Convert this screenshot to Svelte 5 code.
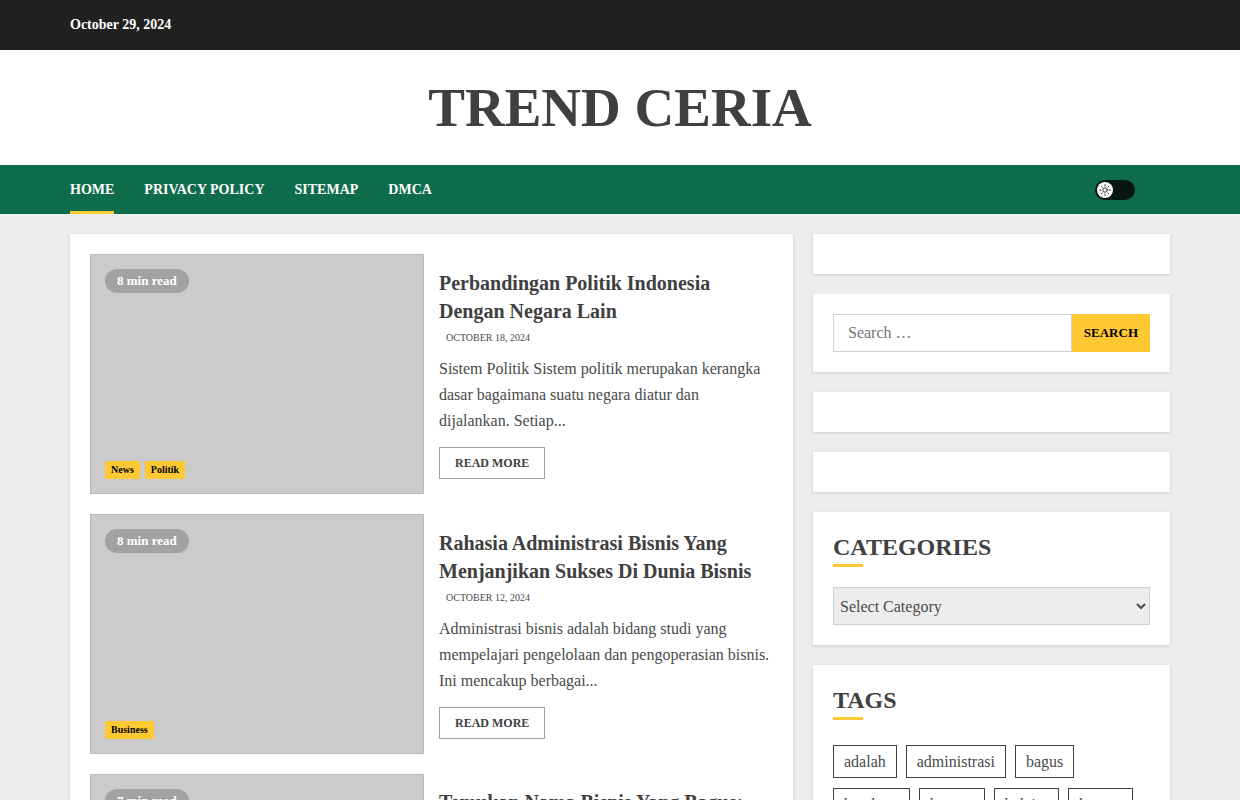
<script>
  const navItems = ['Home', 'Privacy Policy', 'Sitemap', 'DMCA'];

  const posts = [
    {
      title: 'Perbandingan Politik Indonesia Dengan Negara Lain',
      date: 'October 18, 2024',
      minutes: 8,
      categories: ['News', 'Politik'],
      excerpt:
        'Sistem Politik Sistem politik merupakan kerangka dasar bagaimana suatu negara diatur dan dijalankan. Setiap...'
    },
    {
      title: 'Rahasia Administrasi Bisnis Yang Menjanjikan Sukses Di Dunia Bisnis',
      date: 'October 12, 2024',
      minutes: 8,
      categories: ['Business'],
      excerpt:
        'Administrasi bisnis adalah bidang studi yang mempelajari pengelolaan dan pengoperasian bisnis. Ini mencakup berbagai...'
    },
    {
      title: 'Temukan Nama Bisnis Yang Bagus: Panduan Lengkap Untuk Memulai Usaha Anda Sendiri',
      date: 'October 6, 2024',
      minutes: 7,
      categories: ['Business'],
      excerpt: 'Nama bisnis yang bagus adalah kunci untuk menarik perhatian pelanggan...'
    }
  ];

  const tags = ['adalah', 'administrasi', 'bagus', 'bandung', 'barang', 'belajar', 'berapa'];

  let dark = $state(false);
</script>

<div class="topbar">
  <div class="container"><span class="today">October 29, 2024</span></div>
</div>

<header class="masthead">
  <h1><a href="#home">TREND CERIA</a></h1>
</header>

<div class="navbar">
  <div class="container nav-row">
    <nav aria-label="Primary">
      {#each navItems as item, i}
        <a href="#{item}" class:active={i === 0}>{item}</a>
      {/each}
    </nav>
    <button
      class="mode"
      class:dark
      type="button"
      aria-label="Light/Dark Button"
      aria-pressed={dark}
      onclick={() => (dark = !dark)}
    >
      <span class="knob">
        <svg viewBox="0 0 12 12" width="12" height="12" aria-hidden="true">
          <circle cx="6" cy="6" r="2.2" />
          <path
            d="M6 .5v1.5M6 10v1.5M.5 6h1.5M10 6h1.5M2.2 2.2l1 1M8.8 8.8l1 1M2.2 9.8l1-1M8.8 3.2l1-1"
          />
        </svg>
      </span>
    </button>
  </div>
</div>

<div class="container layout">
  <main class="panel">
    {#each posts as post}
      <article>
        <div class="thumb">
          <span class="read-time">{post.minutes} min read</span>
          <div class="cats">
            {#each post.categories as cat}
              <a href="#{cat}">{cat}</a>
            {/each}
          </div>
        </div>
        <div class="text">
          <h2><a href="#post">{post.title}</a></h2>
          <time>{post.date}</time>
          <p>{post.excerpt}</p>
          <a class="more" href="#post">Read More</a>
        </div>
      </article>
    {/each}
  </main>

  <aside>
    <section class="panel"></section>
    <section class="panel">
      <form class="search" onsubmit={(e) => e.preventDefault()}>
        <input type="search" placeholder="Search …" aria-label="Search for:" />
        <button type="submit">Search</button>
      </form>
    </section>
    <section class="panel"></section>
    <section class="panel"></section>
    <section class="panel">
      <h2 class="widget-title"><label for="category">Categories</label></h2>
      <select id="category">
        <option>Select Category</option>
        <option>Business</option>
        <option>News</option>
        <option>Politik</option>
      </select>
    </section>
    <section class="panel">
      <h2 class="widget-title">Tags</h2>
      <div class="tags">
        {#each tags as tag}
          <a href="#{tag}">{tag}</a>
        {/each}
      </div>
    </section>
  </aside>
</div>

<style>
  :global(body) {
    background: #ededed;
    color: #4a4a4a;
    font: 16px/26px 'Liberation Serif', 'Times New Roman', serif;
  }

  * {
    box-sizing: border-box;
  }

  a {
    color: inherit;
    text-decoration: none;
  }

  h1,
  h2,
  p {
    margin: 0;
  }

  .container {
    max-width: 1140px;
    margin: 0 auto;
    padding: 0 20px;
  }

  .topbar {
    padding: 12px 0;
    background: #202020;
    color: #fff;
  }

  .today {
    display: block;
    font-size: 14px;
    font-weight: 700;
    line-height: 26px;
  }

  .masthead {
    padding: 24px 20px;
    background: #fff;
    text-align: center;
  }

  h1 {
    color: #404040;
    font-size: 55px;
    line-height: 67px;
  }

  .navbar {
    background: #0f6c4b;
  }

  .nav-row {
    display: flex;
    align-items: center;
    justify-content: space-between;
  }

  nav {
    display: flex;
    gap: 30px;
  }

  nav a {
    padding-top: 3px;
    border-bottom: 3px solid transparent;
    color: #fff;
    font-size: 14px;
    font-weight: 700;
    line-height: 43px;
    text-transform: uppercase;
  }

  nav a.active {
    border-color: #ffc934;
  }

  .mode {
    display: flex;
    width: 40px;
    height: 20px;
    margin-right: 35px;
    padding: 2px;
    border: 0;
    border-radius: 10px;
    background: #05170f;
    cursor: pointer;
  }

  .mode.dark {
    justify-content: flex-end;
  }

  .knob {
    display: grid;
    place-items: center;
    width: 16px;
    height: 16px;
    border-radius: 50%;
    background: #fff;
  }

  .knob svg {
    fill: none;
    stroke: #222;
    stroke-width: 0.9;
    stroke-linecap: round;
  }

  .layout {
    display: grid;
    grid-template-columns: 723fr 357fr;
    gap: 20px;
    margin-top: 20px;
    margin-bottom: 20px;
  }

  .panel {
    padding: 20px;
    background: #fff;
    box-shadow: 0 1px 3px rgba(0, 0, 0, 0.14);
  }

  main {
    display: grid;
    gap: 20px;
  }

  article {
    display: grid;
    grid-template-columns: 1fr 1fr;
    align-items: center;
    gap: 15px;
  }

  .thumb {
    display: flex;
    flex-direction: column;
    align-items: flex-start;
    justify-content: space-between;
    min-height: 240px;
    padding: 14px;
    border: 1px solid #b9b9b9;
    background: #cbcbcb;
  }

  .read-time {
    padding: 0 12px;
    border-radius: 12px;
    background: #a2a2a2;
    color: #fff;
    font-size: 13px;
    font-weight: 700;
    line-height: 24px;
  }

  .cats {
    display: flex;
    gap: 5px;
  }

  .cats a {
    padding: 0 6px;
    background: #ffc934;
    color: #000;
    font-size: 10px;
    font-weight: 700;
    line-height: 18px;
  }

  article h2 {
    color: #404040;
    font-size: 20px;
    line-height: 28px;
  }

  time {
    display: block;
    margin: 5px 0 10px;
    padding-left: 7px;
    font-size: 10px;
    line-height: 16px;
    text-transform: uppercase;
  }

  .more {
    display: inline-block;
    margin-top: 13px;
    padding: 0 15px;
    border: 1px solid #a0a0a0;
    color: #404040;
    font-size: 12px;
    font-weight: 700;
    line-height: 30px;
    text-transform: uppercase;
    vertical-align: top;
  }

  aside {
    display: flex;
    flex-direction: column;
    gap: 20px;
    min-width: 0;
  }

  .search {
    display: flex;
  }

  .search input {
    flex: 1;
    min-width: 0;
    height: 38px;
    padding: 0 14px;
    border: 1px solid #d0d0d0;
    border-radius: 0;
    background: #fff;
    color: inherit;
    font: inherit;
    appearance: none;
  }

  .search input::placeholder {
    color: #757575;
  }

  .search button {
    padding: 0 12px;
    border: 0;
    background: #ffc934;
    color: #000;
    font: 700 13px 'Liberation Serif', 'Times New Roman', serif;
    text-transform: uppercase;
  }

  .widget-title {
    margin-bottom: 20px;
    color: #404040;
    font-size: 24px;
    line-height: 30px;
    text-transform: uppercase;
  }

  .widget-title::after {
    content: '';
    display: block;
    width: 30px;
    height: 3px;
    margin-top: 2px;
    background: #ffc934;
  }

  select {
    display: block;
    width: 100%;
    height: 38px;
    padding: 0 2px;
    border: 1px solid #d0d0d0;
    border-radius: 0;
    background: #ededed;
    color: #4a4a4a;
    font: inherit;
  }

  .tags {
    display: flex;
    flex-wrap: wrap;
    gap: 10px 9px;
    padding-top: 5px;
  }

  .tags a {
    padding: 0 10px;
    border: 1px solid #404040;
    line-height: 31px;
  }
</style>
